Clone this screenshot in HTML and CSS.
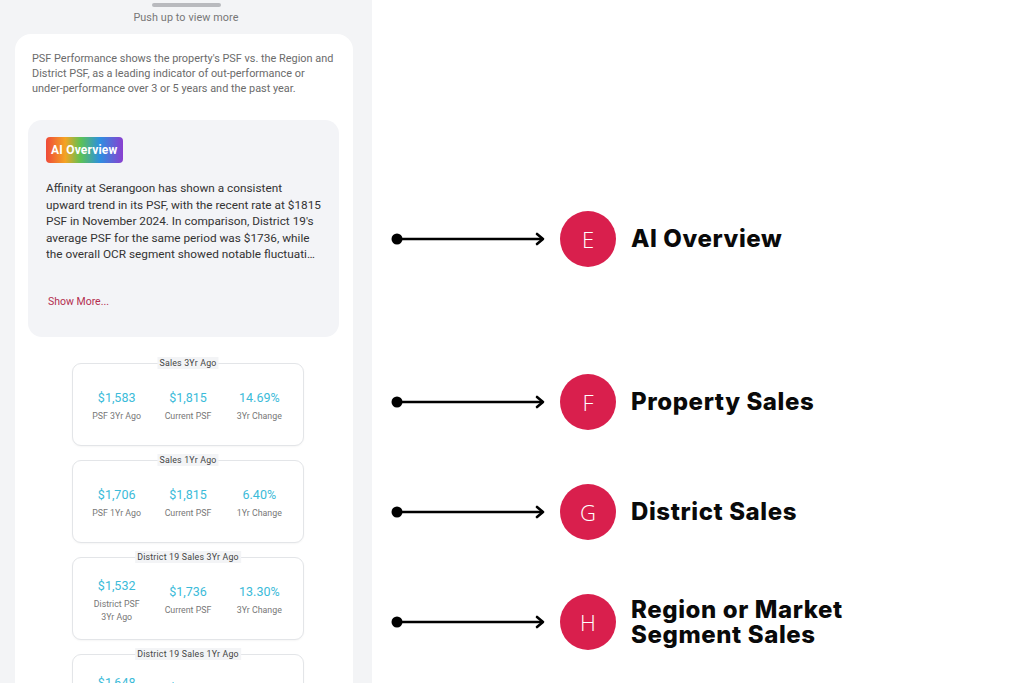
FILE: index.html
```html
<!DOCTYPE html>
<html>
<head>
<meta charset="utf-8">
<link rel="stylesheet" href="styles.css">
</head>
<body>
<div class="page">
  <div class="phone">
    <div class="handle"></div>
    <div class="push">Push up to view more</div>
    <div class="card">
      <p class="intro">PSF Performance shows the property's PSF vs. the Region and District PSF, as a leading indicator of out-performance or under-performance over 3 or 5 years and the past year.</p>
      <div class="ai-box">
        <span class="ai-badge">AI Overview</span>
        <p class="ai-text">Affinity at Serangoon has shown a consistent upward trend in its PSF, with the recent rate at $1815 PSF in November 2024. In comparison, District 19's average PSF for the same period was $1736, while</p>
        <p class="ai-last">the overall OCR segment showed notable fluctuations in PSF over the past years.</p>
        <a class="show-more">Show More...</a>
      </div>
      <div class="stats">
        <div class="stat">
          <span class="stat-title">Sales 3Yr Ago</span>
          <div class="col"><span class="val">$1,583</span><span class="lbl">PSF 3Yr Ago</span></div>
          <div class="col"><span class="val">$1,815</span><span class="lbl">Current PSF</span></div>
          <div class="col"><span class="val">14.69%</span><span class="lbl">3Yr Change</span></div>
        </div>
        <div class="stat">
          <span class="stat-title">Sales 1Yr Ago</span>
          <div class="col"><span class="val">$1,706</span><span class="lbl">PSF 1Yr Ago</span></div>
          <div class="col"><span class="val">$1,815</span><span class="lbl">Current PSF</span></div>
          <div class="col"><span class="val">6.40%</span><span class="lbl">1Yr Change</span></div>
        </div>
        <div class="stat">
          <span class="stat-title">District 19 Sales 3Yr Ago</span>
          <div class="col"><span class="val">$1,532</span><span class="lbl">District PSF<br>3Yr Ago</span></div>
          <div class="col"><span class="val">$1,736</span><span class="lbl">Current PSF</span></div>
          <div class="col"><span class="val">13.30%</span><span class="lbl">3Yr Change</span></div>
        </div>
        <div class="stat">
          <span class="stat-title">District 19 Sales 1Yr Ago</span>
          <div class="col"><span class="val">$1,648</span><span class="lbl">District PSF<br>1Yr Ago</span></div>
          <div class="col"><span class="val">$1,736</span><span class="lbl">Current PSF</span></div>
          <div class="col"><span class="val">5.34%</span><span class="lbl">1Yr Change</span></div>
        </div>
      </div>
    </div>
  </div>
  <div class="notes">
    <div class="note n-e">
      <svg class="arrow" width="156" height="14" viewBox="0 0 156 14"><circle cx="6" cy="7" r="5.5" fill="#000"/><line x1="6" y1="7" x2="152" y2="7" stroke="#000" stroke-width="2.6"/><polyline points="146,2 152,7 146,12" fill="none" stroke="#000" stroke-width="2.6" stroke-linecap="round" stroke-linejoin="round"/></svg>
      <span class="badge">E</span>
      <span class="note-text">AI Overview</span>
    </div>
    <div class="note n-f">
      <svg class="arrow" width="156" height="14" viewBox="0 0 156 14"><circle cx="6" cy="7" r="5.5" fill="#000"/><line x1="6" y1="7" x2="152" y2="7" stroke="#000" stroke-width="2.6"/><polyline points="146,2 152,7 146,12" fill="none" stroke="#000" stroke-width="2.6" stroke-linecap="round" stroke-linejoin="round"/></svg>
      <span class="badge">F</span>
      <span class="note-text">Property Sales</span>
    </div>
    <div class="note n-g">
      <svg class="arrow" width="156" height="14" viewBox="0 0 156 14"><circle cx="6" cy="7" r="5.5" fill="#000"/><line x1="6" y1="7" x2="152" y2="7" stroke="#000" stroke-width="2.6"/><polyline points="146,2 152,7 146,12" fill="none" stroke="#000" stroke-width="2.6" stroke-linecap="round" stroke-linejoin="round"/></svg>
      <span class="badge">G</span>
      <span class="note-text">District Sales</span>
    </div>
    <div class="note n-h">
      <svg class="arrow" width="156" height="14" viewBox="0 0 156 14"><circle cx="6" cy="7" r="5.5" fill="#000"/><line x1="6" y1="7" x2="152" y2="7" stroke="#000" stroke-width="2.6"/><polyline points="146,2 152,7 146,12" fill="none" stroke="#000" stroke-width="2.6" stroke-linecap="round" stroke-linejoin="round"/></svg>
      <span class="badge">H</span>
      <span class="note-text">Region or Market<br>Segment Sales</span>
    </div>
  </div>
</div>
</body>
</html>
```

FILE: styles.css
```css
* { box-sizing: border-box; }
html, body { margin: 0; padding: 0; }
body {
  width: 1024px;
  height: 683px;
  overflow: hidden;
  background: #fff;
  font-family: Roboto, "Liberation Sans", sans-serif;
}
.page {
  display: flex;
  height: 683px;
}
.phone {
  width: 372px;
  flex: none;
  background: #f3f4f6;
  display: flex;
  flex-direction: column;
  align-items: center;
  padding-top: 3px;
  overflow: hidden;
}
.handle {
  flex: none;
  display: block;
  width: 69px;
  height: 4px;
  border-radius: 2px;
  background: #b9babe;
}
.push {
  margin-top: 4px;
  font-size: 10.8px;
  color: #777;
  line-height: 14px;
  letter-spacing: 0.1px;
}
.card {
  margin-top: 9px;
  align-self: flex-start;
  margin-left: 15px;
  width: 338px;
  background: #fff;
  border-radius: 16px;
  padding: 17px 13px 0 13px;
  flex: 1;
}
.intro {
  margin: 0 0 0 4px;
  width: 304px;
  font-size: 10.9px;
  line-height: 15px;
  color: #6b6b6b;
}
.ai-box {
  margin-top: 24px;
  background: #f3f4f7;
  border-radius: 14px;
  padding: 17px 18px 28px 18px;
  width: 311px;
  height: 217px;
}
.ai-badge {
  display: inline-block;
  height: 26px;
  line-height: 26px;
  padding: 0 5px;
  border-radius: 4px;
  color: #fff;
  font-weight: 700;
  font-size: 12px;
  letter-spacing: 0.2px;
  background: linear-gradient(90deg, #ef4a3a 0%, #f4a323 25%, #5cc255 45%, #2d8fe0 70%, #8a3fd0 100%);
}
.ai-text,
.ai-last {
  margin: 0;
  font-size: 11.8px;
  line-height: 16.5px;
  color: #333;
}
.ai-text {
  margin-top: 17px;
}
.ai-last {
  white-space: nowrap;
  overflow: hidden;
  text-overflow: ellipsis;
}
.show-more {
  display: block;
  margin-top: 32px;
  margin-left: 2px;
  font-size: 10.5px;
  color: #b42e4f;
}
.stats {
  display: flex;
  flex-direction: column;
  align-items: center;
  gap: 14px;
  margin-top: 26px;
  margin-left: 8px;
}
.stat {
  position: relative;
  width: 232px;
  height: 83px;
  border: 1px solid #e3e5e8;
  border-radius: 9px;
  background: #fff;
  display: flex;
  align-items: center;
  padding: 4px 8px 0 8px;
  box-shadow: 0 1px 2px rgba(0,0,0,0.04);
}
.stat-title {
  position: absolute;
  top: -7px;
  left: 50%;
  transform: translateX(-50%);
  white-space: nowrap;
  font-size: 8.8px;
  line-height: 12px;
  color: #444;
  background: #f3f4f6;
  padding: 0 2px;
  letter-spacing: 0.2px;
}
.col {
  flex: 1;
  display: flex;
  flex-direction: column;
  align-items: center;
  text-align: center;
}
.val {
  font-size: 12.5px;
  line-height: 15px;
  color: #3bbbd9;
}
.lbl {
  margin-top: 5px;
  font-size: 8.8px;
  line-height: 13px;
  color: #777;
}
.notes {
  flex: 1;
  display: flex;
  flex-direction: column;
  padding-top: 211px;
  padding-left: 19px;
}
.note {
  display: flex;
  align-items: center;
  height: 56px;
}
.n-f { margin-top: 107px; }
.n-g, .n-h { margin-top: 54px; }
.arrow { flex: none; margin-right: 13px; }
.badge {
  width: 56px;
  height: 56px;
  border-radius: 50%;
  background: #d91f4d;
  color: #fff;
  display: flex;
  align-items: center;
  justify-content: center;
  font-size: 22px;
  font-weight: 300;
  font-family: "Open Sans", Roboto, sans-serif;
  flex: none;
}
.note-text {
  margin-left: 15px;
  font-family: Inter, "Open Sans", sans-serif;
  font-weight: 800;
  font-size: 24px;
  line-height: 25.5px;
  color: #0a0a0a;
  letter-spacing: 0.6px;
}
```
